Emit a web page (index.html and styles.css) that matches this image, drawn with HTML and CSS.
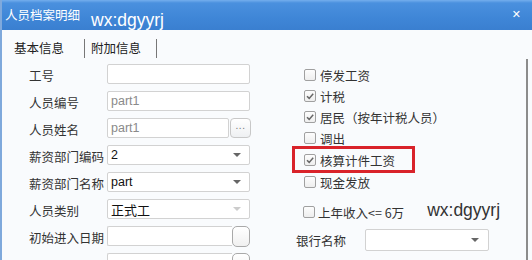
FILE: index.html
```html
<!DOCTYPE html>
<html lang="zh">
<head>
<meta charset="utf-8">
<link rel="stylesheet" href="styles.css">
</head>
<body>
<div class="win">
  <div class="titlebar">
    <span class="title">人员档案明细</span>
    <span class="wm">wx:dgyyrj</span>
    <span class="close">✕</span>
  </div>
  <div class="tabs">
    <span class="tab">基本信息</span>
    <span class="sep sep1"></span>
    <span class="tab tab2">附加信息</span>
    <span class="sep sep2"></span>
  </div>
  <div class="content">
    <div class="left">
      <div class="row"><span class="label">工号</span><div class="field"></div></div>
      <div class="row"><span class="label">人员编号</span><div class="field gray">part1</div></div>
      <div class="row"><span class="label">人员姓名</span><div class="field short gray">part1</div><div class="btn dots">...</div></div>
      <div class="row"><span class="label">薪资部门编码</span><div class="field combo"><span>2</span><i class="arrow"></i></div></div>
      <div class="row"><span class="label">薪资部门名称</span><div class="field combo"><span>part</span><i class="arrow"></i></div></div>
      <div class="row"><span class="label">人员类别</span><div class="field combo cjk"><span>正式工</span><i class="arrow dim"></i></div></div>
      <div class="row"><span class="label">初始进入日期</span><div class="field date"></div><div class="btn datebtn"></div></div>
      <div class="row"><span class="label"></span><div class="field date"></div><div class="btn datebtn"></div></div>
    </div>
    <div class="right">
      <div class="checks">
        <div class="chk"><span class="box"></span>停发工资</div>
        <div class="chk"><span class="box on"><svg width="10" height="10" viewBox="0 0 10 10"><polyline points="2,5.2 4.2,7.4 8.2,2.8" fill="none" stroke="#666" stroke-width="1.5"/></svg></span>计税</div>
        <div class="chk"><span class="box on"><svg width="10" height="10" viewBox="0 0 10 10"><polyline points="2,5.2 4.2,7.4 8.2,2.8" fill="none" stroke="#666" stroke-width="1.5"/></svg></span>居民（按年计税人员）</div>
        <div class="chk"><span class="box"></span>调出</div>
        <div class="chk marked"><span class="box on"><svg width="10" height="10" viewBox="0 0 10 10"><polyline points="2,5.2 4.2,7.4 8.2,2.8" fill="none" stroke="#666" stroke-width="1.5"/></svg></span>核算计件工资<span class="redbox"></span></div>
        <div class="chk"><span class="box"></span>现金发放</div>
        <div class="chk income"><span class="box"></span>上年收入&lt;= 6万<span class="wm2">wx:dgyyrj</span></div>
      </div>
      <div class="bank"><span class="blabel">银行名称</span><div class="field combo bsel"><i class="arrow"></i></div></div>
    </div>
  </div>
</div>
</body>
</html>
```

FILE: styles.css
```css
html, body {
  margin: 0;
  padding: 0;
  width: 532px;
  height: 260px;
  overflow: hidden;
  background: #f9fbfd;
}
.win {
  width: 532px;
  height: 260px;
  overflow: hidden;
  display: flex;
  flex-direction: column;
  font-family: "Noto Sans CJK SC", "Noto Sans", sans-serif;
  font-size: 12.5px;
  color: #333;
  border-left: 2px solid #7fa9dc;
  box-sizing: border-box;
  background: #f9fbfd;
}
.titlebar {
  height: 30px;
  flex: none;
  display: flex;
  align-items: flex-start;
  background: linear-gradient(#74aeed 0px, #4a90de 3px, #3f86d7 60%, #3a7fd0 100%);
  color: #fff;
  margin-left: -2px;
  padding-left: 5px;
}
.title {
  font-size: 12.5px;
  line-height: 14px;
  margin-top: 8px;
  width: 86px;
}
.wm {
  font-family: "Liberation Sans", Arial, sans-serif;
  font-size: 17.5px;
  line-height: 20px;
  margin-top: 10px;
}
.close {
  margin-left: auto;
  margin-right: 11px;
  margin-top: 7px;
  font-family: "DejaVu Sans", sans-serif;
  font-weight: bold;
  font-size: 11px;
  line-height: 16px;
}
.tabs {
  height: 20px;
  margin-top: 8px;
  display: flex;
  align-items: center;
  padding-left: 12px;
  flex: none;
}
.tab {
  color: #222;
  line-height: 20px;
  margin-top: -1px;
}
.tab2 { margin-left: 6px; }
.sep {
  width: 1px;
  height: 19px;
  background: #777;
}
.sep1 { margin-left: 20px; }
.sep2 { margin-left: 15px; }
.content {
  flex: 1;
  display: flex;
  padding-top: 6px;
  padding-left: 27px;
}
.left {
  width: 223px;
  display: flex;
  flex-direction: column;
  gap: 7px;
}
.row {
  display: flex;
  align-items: center;
  height: 20px;
  flex: none;
}
.label {
  width: 78px;
  flex: none;
  color: #333;
  line-height: 20px;
  margin-top: 3px;
}
.field {
  width: 143px;
  height: 20px;
  box-sizing: border-box;
  border: 1px solid #d2d2d2;
  border-radius: 2px;
  background: #fff;
  display: flex;
  align-items: center;
  padding-left: 3px;
  font-family: "Liberation Sans", Arial, sans-serif;
  font-size: 12.5px;
  color: #111;
}
.field.gray { color: #8a8a8a; }
.field.short { width: 122px; }
.field.date { width: 125px; border-right: none; border-radius: 2px 0 0 2px; }
.field.cjk span { font-family: "Noto Sans CJK SC", sans-serif; font-size: 13px; }
.combo { justify-content: space-between; padding-right: 8px; }
.arrow {
  width: 0;
  height: 0;
  border-left: 4px solid transparent;
  border-right: 4px solid transparent;
  border-top: 4px solid #666;
}
.arrow.dim { border-top-color: #ccc; }
.btn {
  box-sizing: border-box;
  border: 1px solid #c8c8c8;
  border-radius: 4px;
  background: linear-gradient(#ffffff, #eef0f2);
}
.dots {
  width: 21px;
  height: 20px;
  margin-left: 1px;
  color: #777;
  font-size: 10px;
  line-height: 14px;
  text-align: center;
  font-family: "Liberation Sans", Arial, sans-serif;
  letter-spacing: 0.5px;
}
.datebtn {
  width: 18px;
  height: 21px;
  border: 1px solid #a9a9a9;
  border-radius: 5px;
  background: linear-gradient(#ffffff, #f0f0f0);
}
.right {
  flex: 1;
  margin-left: 40px;
  margin-top: -5px;
  border-right: 2px solid #8c8c8c;
  margin-right: 4px;
  padding-top: 5px;
  display: flex;
  flex-direction: column;
}
.checks {
  display: flex;
  flex-direction: column;
  padding-left: 12px;
}
.chk {
  height: 22px;
  display: flex;
  align-items: center;
  color: #333;
  position: relative;
}
.chk:nth-child(2), .chk:nth-child(3), .chk:nth-child(4) { margin-top: -1px; }
.box {
  width: 12px;
  height: 12px;
  box-sizing: border-box;
  border: 1px solid #a0a0a0;
  border-radius: 2px;
  background: linear-gradient(#fdfdfd, #eeeeee);
  margin-right: 4px;
  display: flex;
  align-items: center;
  justify-content: center;
  flex: none;
}
.redbox {
  position: absolute;
  left: -12px;
  top: -3px;
  width: 123px;
  height: 27px;
  box-sizing: border-box;
  border: 3px solid #d9232a;
}
.income {
  margin-top: 8px;
  margin-left: -1px;
}
.income .box { margin-right: 3px; }
.wm2 {
  font-family: "Liberation Sans", Arial, sans-serif;
  font-size: 17.5px;
  color: #333;
  margin-left: 23px;
  margin-top: -4px;
}
.bank {
  display: flex;
  align-items: center;
  margin-top: 6px;
  padding-left: 4px;
  height: 22px;
}
.blabel { width: 69px; }
.bsel { width: 124px; height: 22px; padding-right: 9px; justify-content: flex-end; }
```
